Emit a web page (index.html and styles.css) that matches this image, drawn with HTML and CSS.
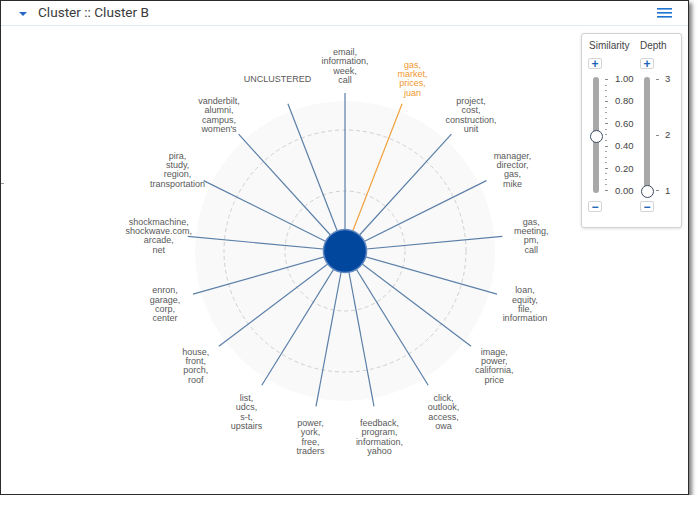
FILE: index.html
```html
<!DOCTYPE html>
<html lang="en">
<head>
<meta charset="UTF-8">
<meta name="viewport" content="width=device-width,initial-scale=1.0">
<title>Cluster B</title>
<link rel="stylesheet" href="styles.css">
</head>
<body>

<div class="frame">
  <span class="edge-mark"></span>

  <!-- ===== Header ===== -->
  <header class="bar">
    <span class="caret"></span>
    <h1 class="title">Cluster :: Cluster B</h1>
    <button class="menu" aria-label="Menu">
      <svg width="15" height="10" viewBox="0 0 15 10">
        <rect x="0" y="0" width="15" height="1.6"/>
        <rect x="0" y="4" width="15" height="1.6"/>
        <rect x="0" y="8" width="15" height="1.6"/>
      </svg>
    </button>
  </header>

  <!-- ===== Radial diagram ===== -->
  <main class="stage">
    <svg id="radial" width="687" height="468" viewBox="0 0 687 468"></svg>

    <!-- sliders -->
    <div class="panel">
      <div class="ctl ctl-sim">
        <div class="ctl-title">Similarity</div>
        <button class="step">+</button>
        <div class="slider" data-value="0.49">
          <div class="track"><span class="thumb"></span></div>
          <div class="ticks"></div>
          <div class="nums"><span>1.00</span><span>0.80</span><span>0.60</span><span>0.40</span><span>0.20</span><span>0.00</span></div>
        </div>
        <button class="step">&minus;</button>
      </div>
      <div class="ctl ctl-depth">
        <div class="ctl-title">Depth</div>
        <button class="step">+</button>
        <div class="slider" data-value="0">
          <div class="track"><span class="thumb"></span></div>
          <div class="ticks major"></div>
          <div class="nums"><span>3</span><span>2</span><span>1</span></div>
        </div>
        <button class="step">&minus;</button>
      </div>
    </div>
  </main>
</div>

<script>
/* ---------- data ---------- */
const topics = [
  {words:['email,','information,','week,','call']},
  {words:['gas,','market,','prices,','juan'], hot:true},
  {words:['project,','cost,','construction,','unit']},
  {words:['manager,','director,','gas,','mike']},
  {words:['gas,','meeting,','pm,','call']},
  {words:['loan,','equity,','file,','information']},
  {words:['image,','power,','california,','price']},
  {words:['click,','outlook,','access,','owa']},
  {words:['feedback,','program,','information,','yahoo']},
  {words:['power,','york,','free,','traders']},
  {words:['list,','udcs,','s-t,','upstairs']},
  {words:['house,','front,','porch,','roof']},
  {words:['enron,','garage,','corp,','center']},
  {words:['shockmachine,','shockwave.com,','arcade,','net']},
  {words:['pira,','study,','region,','transportation']},
  {words:['vanderbilt,','alumni,','campus,',"women's"]},
  {words:['UNCLUSTERED']},
];

/* ---------- radial ---------- */
const cx = 344, cy = 225, spoke = 158, labelR = 187, lh = 9.4;
const n = topics.length;
let lines = '', labels = '';
topics.forEach((t, i) => {
  const a = (-90 + i * 360 / n) * Math.PI / 180;
  const x2 = (cx + spoke * Math.cos(a)).toFixed(1);
  const y2 = (cy + spoke * Math.sin(a)).toFixed(1);
  lines += `<line class="spoke${t.hot ? ' hot' : ''}" x1="${cx}" y1="${cy}" x2="${x2}" y2="${y2}"/>`;
  const lx = (cx + labelR * Math.cos(a)).toFixed(1);
  const ly = cy + 2 + labelR * Math.sin(a) - (t.words.length - 1) * lh / 2;
  labels += `<text class="lbl${t.hot ? ' hot' : ''}" x="${lx}" y="${ly.toFixed(1)}">` +
    t.words.map((w, j) => `<tspan x="${lx}" dy="${j ? lh : 0}">${w}</tspan>`).join('') +
    `</text>`;
});
document.getElementById('radial').innerHTML = `
  <circle class="disc" cx="${cx}" cy="${cy}" r="150"/>
  <circle class="ring" cx="${cx}" cy="${cy}" r="121"/>
  <circle class="ring" cx="${cx}" cy="${cy}" r="60"/>
  ${lines}
  <circle class="hub" cx="${cx}" cy="${cy}" r="21.5"/>
  ${labels}`;

/* ---------- sliders ---------- */
document.querySelectorAll('.slider').forEach(s => {
  const ticks = s.querySelector('.ticks');
  const count = ticks.classList.contains('major') ? 3 : 21;
  for (let i = 0; i < count; i++) {
    const t = document.createElement('i');
    if (count === 21 && i % 4 === 0) t.className = 'big';
    ticks.appendChild(t);
  }
  const v = parseFloat(s.dataset.value);
  s.querySelector('.thumb').style.top = (2 + (1 - v) * 112) + 'px';
});
</script>
</body>
</html>
```

FILE: styles.css
```css
*{box-sizing:border-box}
html,body{margin:0;padding:0;background:#fff}

/* ===== Window ===== */
.frame{
  position:relative;width:689px;height:495px;
  border:1px solid #2b2b2b;background:#fff;
  box-shadow:3px 3px 4px rgba(0,0,0,.5);
  display:flex;flex-direction:column;
}
.edge-mark{position:absolute;left:0;top:182px;width:3px;height:1px;background:#9a9a9a}

/* ===== Header ===== */
.bar{
  height:25px;flex:none;display:flex;align-items:center;
  padding:0 16px 0 18px;border-bottom:1px solid #e1e8f0;
}
.caret{
  width:0;height:0;margin-right:11px;margin-top:1px;
  border-left:4px solid transparent;border-right:4px solid transparent;
  border-top:4px solid #2567c2;
}
.title{
  flex:1;margin:0;font:400 13.6px/1 Roboto,sans-serif;color:#3b3b3b;
}
.menu{background:none;border:none;padding:0;display:flex;cursor:pointer}
.menu svg{fill:#1f74d3}

/* ===== Stage ===== */
.stage{position:relative;flex:1}
#radial{display:block}
.disc{fill:#f9f9f9}
.ring{fill:none;stroke:#d0d0d0;stroke-width:1;stroke-dasharray:4 3}
.spoke{stroke:#5b7fa7;stroke-width:1.2}
.spoke.hot{stroke:#f0a23c}
.hub{fill:#00479d;stroke:#5f88c2;stroke-width:1.5}
.lbl{
  font:9px "Liberation Sans",Arial,sans-serif;fill:#595959;
  text-anchor:middle;dominant-baseline:central;
}
.lbl.hot{fill:#f0972e}

/* ===== Slider panel ===== */
.panel{
  position:absolute;left:580px;top:7px;width:101px;height:195px;
  border:1px solid #d2d2d2;border-radius:3px;background:#fff;
  box-shadow:0 1px 3px rgba(0,0,0,.12);
  display:flex;padding:6px 0 14px 6px;
  font-family:"Liberation Sans",Arial,sans-serif;color:#444;
}
.ctl{display:flex;flex-direction:column;align-items:flex-start}
.ctl-sim{width:51px}
.ctl-title{font-size:10px;line-height:12px;height:12px;margin-bottom:6px;margin-left:1px}
.step{
  width:14px;height:11px;padding:0;border:1px solid #d4d4d4;border-radius:2px;
  background:#fff;color:#1a64b8;font:700 12px/8px "Liberation Sans",Arial,sans-serif;
  display:flex;align-items:center;justify-content:center;cursor:pointer;
}
.slider{display:flex;height:116px;margin:8px 0}
.ctl-sim .slider{margin-left:5px}
.ctl-depth .step{margin-left:1px}
.ctl-depth .slider{margin-left:5px}

.track{position:relative;width:6px;height:116px;border-radius:3px;background:#a8a8a8}
.thumb{
  position:absolute;left:50%;width:13px;height:13px;margin:-6.5px 0 0 -6.5px;
  border:1.5px solid #3a4b5f;border-radius:50%;background:#fff;
}
.ticks{
  display:flex;flex-direction:column;justify-content:space-between;
  padding:2px 0;margin-left:6px;
}
.ticks i{display:block;width:2px;height:1px;background:#a5a5a5}
.ticks i.big{width:3px;background:#8a8a8a}
.ticks.major i{width:3px;background:#8a8a8a}
.nums{
  display:flex;flex-direction:column;justify-content:space-between;
  font-size:9.5px;line-height:10px;margin:-3px 0 -3px 7px;
}
.ctl-depth .nums{margin-left:6px}
```
